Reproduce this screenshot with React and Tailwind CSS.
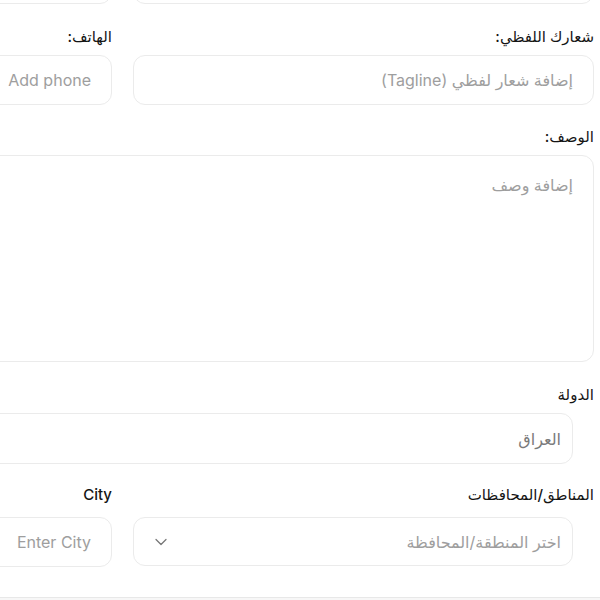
import React from 'react';
import { ChevronDown } from 'lucide-react';

const font = { fontFamily: 'Inter, "Noto Sans", "DejaVu Sans", sans-serif' };

const Label = ({ children, className = '' }) => (
  <label className={`block text-[15px] font-medium text-[#141414] leading-5 ${className}`}>{children}</label>
);

const Field = ({ placeholder, dir, className = '' }) => (
  <div
    dir={dir}
    className={`h-[50px] rounded-xl border border-[#ebebeb] bg-white flex items-center px-5 text-base text-[#9e9e9e] ${className}`}
  >
    <span className={dir === 'ltr' ? 'ml-auto' : ''}>{placeholder}</span>
  </div>
);

const App = () => {
  return (
    <div dir="rtl" className="w-[600px] h-[600px] overflow-hidden bg-white relative" style={font}>
      <div className="w-[1100px] pr-[6px]">
        <div className="grid grid-cols-[461px_461px] gap-x-[21px] -mt-[46px]">
          <div className="h-[50px] rounded-xl border border-[#ebebeb]" />
          <div className="h-[50px] rounded-xl border border-[#ebebeb]" />
        </div>

        <div className="grid grid-cols-[461px_461px] gap-x-[21px] mt-[23px]">
          <div>
            <Label className="mb-2">شعارك اللفظي:</Label>
            <Field placeholder="إضافة شعار لفظي (Tagline)" />
          </div>
          <div>
            <Label className="mb-2">الهاتف:</Label>
            <Field placeholder="Add phone" dir="ltr" />
          </div>
        </div>

        <div className="mt-[22px]">
          <Label className="mb-2">الوصف:</Label>
          <div className="h-[207px] rounded-xl border border-[#ebebeb] px-5 pt-[17px] text-base text-[#9e9e9e]">
            إضافة وصف
          </div>
        </div>

        <div className="mt-[22px]">
          <Label className="pt-[1px] mb-2">الدولة</Label>
          <div className="mr-[21px] h-[51px] rounded-xl border border-[#ebebeb] flex items-center px-[11px] text-base text-[#7a7a7a]">
            العراق
          </div>
        </div>

        <div className="grid grid-cols-[461px_461px] gap-x-[21px] mt-[21px]">
          <div>
            <Label className="mb-3">المناطق/المحافظات</Label>
            <div className="mr-[21px] h-[49px] rounded-xl border border-[#ebebeb] flex items-center justify-between pr-[11px] pl-[17px] text-base text-[#9e9e9e]">
              <span>اختر المنطقة/المحافظة</span>
              <ChevronDown size={20} strokeWidth={1.5} className="text-[#777]" />
            </div>
          </div>
          <div>
            <Label className="mb-3">City</Label>
            <Field placeholder="Enter City" dir="ltr" className="h-[49px]" />
          </div>
        </div>
      </div>
      <div className="absolute left-0 right-0 top-[597px] h-[10px] border-t border-[#e8e8e8] bg-[#f7f7f7]" />
    </div>
  );
};

export default App;
